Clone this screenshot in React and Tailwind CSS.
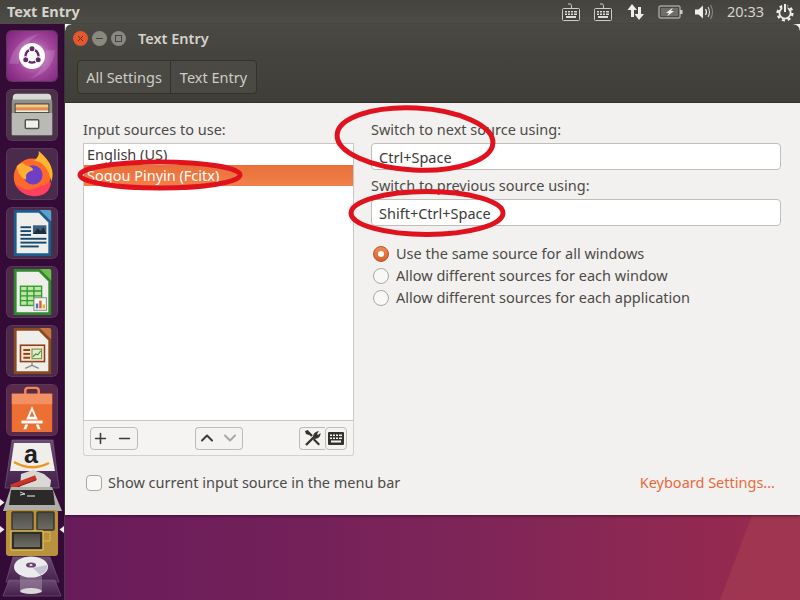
import { ChevronDown, ChevronUp, Minus, Plus } from 'lucide-react'

const font = { fontFamily: '"Noto Sans", sans-serif' }

function Tile({ children, bg = 'bg-white/10' }) {
  return (
    <div className={`flex h-[52px] w-[52px] items-center justify-center overflow-hidden rounded-[6px] border border-white/10 ${bg}`}>
      {children}
    </div>
  )
}

function UbuntuIcon() {
  return (
    <svg width="52" height="52" viewBox="0 0 52 52">
      <defs>
        <radialGradient id="ub" cx="0.55" cy="0.5" r="0.75">
          <stop offset="0" stopColor="#d9a0d0" />
          <stop offset="0.5" stopColor="#a0459a" />
          <stop offset="1" stopColor="#7c1f78" />
        </radialGradient>
      </defs>
      <rect width="52" height="52" fill="url(#ub)" />
      <path d="M2 34 Q8 8 34 3 Q14 14 12 34 Z" fill="#fff" opacity="0.16" />
      <path d="M50 20 Q48 44 22 50 Q42 40 40 20 Z" fill="#fff" opacity="0.14" />
      <circle cx="26" cy="26" r="13.5" fill="#fff" />
      <circle cx="26" cy="26" r="6.8" fill="none" stroke="#5f2a68" strokeWidth="2.4" />
      <circle cx="26" cy="18.5" r="3.6" fill="#fff" />
      <circle cx="19.5" cy="29.8" r="3.6" fill="#fff" />
      <circle cx="32.5" cy="29.8" r="3.6" fill="#fff" />
      <circle cx="26" cy="18.5" r="2.6" fill="#5f2a68" />
      <circle cx="19.5" cy="29.8" r="2.6" fill="#5f2a68" />
      <circle cx="32.5" cy="29.8" r="2.6" fill="#5f2a68" />
    </svg>
  )
}

function FilesIcon() {
  return (
    <svg width="52" height="52" viewBox="0 0 52 52">
      <rect width="52" height="52" fill="#4a3347" />
      <path d="M6 8 Q6 4 10 4 H42 Q46 4 46 8 V14 H6 Z" fill="#d8d8d4" />
      <rect x="5" y="10" width="42" height="37" rx="2" fill="#8f908b" />
      <rect x="8" y="14" width="36" height="10" fill="#3e3a35" />
      <rect x="9" y="15" width="34" height="4" fill="#f5c98a" />
      <rect x="9" y="18" width="34" height="3" fill="#e38c4f" />
      <rect x="9" y="21" width="34" height="2" fill="#f3e6d2" />
      <rect x="5" y="24" width="42" height="23" fill="#b9bab5" />
      <rect x="19" y="31" width="14" height="9" rx="1" fill="#f0f0ec" stroke="#55524d" strokeWidth="1.5" />
    </svg>
  )
}

function FirefoxIcon() {
  return (
    <svg width="52" height="52" viewBox="0 0 52 52">
      <rect width="52" height="52" fill="#4a2b4b" />
      <circle cx="26" cy="29" r="19" fill="#ff6a2b" />
      <path d="M33 2 Q52 18 46 34 Q42 14 28 12 Q34 8 33 2 Z" fill="#ffb52e" />
      <path d="M46 34 Q44 50 26 49 Q14 48 8 36 Q20 46 32 40 Q42 36 46 34 Z" fill="#ff3f5e" />
      <circle cx="27" cy="27" r="10" fill="#6d3fc4" />
      <path d="M10 18 Q16 12 19 17 Q28 19 27 22 Q18 24 20 32 Q12 30 10 18 Z" fill="#ffb033" />
    </svg>
  )
}

function DocBase({ dark, light, children }) {
  return (
    <svg width="52" height="52" viewBox="0 0 52 52">
      <rect width="52" height="52" fill="#4b2a4a" />
      <path d="M7 2 H34 L46 14 V50 H7 Z" fill={dark} />
      <path d="M34 2 H44 Q46 2 46 4 V14 Z" fill={light} />
      <path d="M10 5 H33 L43 15 V47 H10 Z" fill="#eeeeea" />
      {children}
    </svg>
  )
}

function WriterIcon() {
  return (
    <DocBase dark="#1b5d8e" light="#5aa0cd">
      <rect x="27" y="18" width="14" height="9" fill="#3d5f7f" />
      <path d="M27 27 L32 21 L35 24 L38 20 L41 27 Z" fill="#1f2f3a" />
      <g fill="#18496f">
        <rect x="14" y="19" width="11" height="2" />
        <rect x="14" y="23" width="11" height="2" />
        <rect x="14" y="27" width="11" height="2" />
        <rect x="14" y="31" width="27" height="2" />
        <rect x="14" y="35" width="27" height="2" />
        <rect x="14" y="39" width="19" height="2" />
      </g>
    </DocBase>
  )
}

function CalcIcon() {
  return (
    <DocBase dark="#2d8a2d" light="#6cc04a">
      <g fill="none" stroke="#2f9a2f" strokeWidth="1.4">
        <rect x="14" y="20" width="22" height="20" fill="#bfe6a5" />
        <path d="M14 25 H36 M14 30 H36 M14 35 H36 M21 20 V40 M28 20 V40" />
      </g>
      <rect x="28" y="32" width="13" height="13" fill="#f5f5f2" stroke="#888" />
      <rect x="30" y="38" width="2.5" height="5" fill="#3a7cc0" />
      <rect x="33.5" y="35" width="2.5" height="8" fill="#d9622b" />
      <rect x="37" y="39" width="2.5" height="4" fill="#e0b030" />
    </DocBase>
  )
}

function ImpressIcon() {
  return (
    <DocBase dark="#8a4a20" light="#c9743d">
      <rect x="14" y="20" width="25" height="17" fill="#f7e3cf" stroke="#8e3f16" strokeWidth="1.6" />
      <g fill="#8e3f16">
        <rect x="17" y="24" width="7" height="2" />
        <rect x="17" y="28" width="7" height="2" />
        <rect x="17" y="32" width="7" height="2" />
      </g>
      <rect x="26" y="24" width="10" height="10" fill="#dfeccd" stroke="#5e8a3a" />
      <path d="M27 32 L30 29 L32 30 L35 26" fill="none" stroke="#4a8a2a" strokeWidth="1.2" />
      <path d="M26 37 V41 M26 41 L19 44 M26 41 L33 44" stroke="#8a8a84" strokeWidth="1.4" fill="none" />
    </DocBase>
  )
}

function StoreIcon() {
  return (
    <svg width="52" height="52" viewBox="0 0 52 52">
      <rect width="52" height="52" fill="#5a2a4a" />
      <path d="M19 10 V6 Q19 3 22 3 H30 Q33 3 33 6 V10" fill="none" stroke="#ee8a55" strokeWidth="2.5" />
      <rect x="5" y="9" width="42" height="40" rx="1" fill="#ec6f33" />
      <rect x="5" y="9" width="42" height="11" fill="#f39062" />
      <path d="M26 22 L20 36 H32 Z M26 27 L23.5 33 H28.5 Z" fill="#fff" fillRule="evenodd" />
      <rect x="15" y="37" width="22" height="3" fill="#fff" />
      <path d="M19 41 L17 46 H20 L22 41 Z M33 41 L35 46 H32 L30 41 Z" fill="#fff" />
    </svg>
  )
}

// the folded end of the launcher, drawn as one stack in page coordinates
function FoldedStack() {
  return (
    <svg width="64" height="161" viewBox="0 439 64 161" className="block">
      <defs>
        <linearGradient id="tray" x1="0" y1="0" x2="0" y2="1">
          <stop offset="0" stopColor="#6b4a70" />
          <stop offset="1" stopColor="#42204a" />
        </linearGradient>
        <linearGradient id="pane" x1="0" y1="0" x2="0" y2="1">
          <stop offset="0" stopColor="#4a4944" />
          <stop offset="1" stopColor="#6d6c67" />
        </linearGradient>
      </defs>

      {/* amazon */}
      <path d="M12 440 H53 L59 488 H5 Z" fill="url(#tray)" stroke="#7a6180" strokeWidth="0.6" />
      <path d="M14 443 H50 L55 471 H10 Z" fill="#efeeeb" />
      <text x="31" y="463" textAnchor="middle" fontFamily="Liberation Sans, sans-serif" fontWeight="700" fontSize="25" fill="#22211f">a</text>
      <path d="M14 462 Q31 472 49 463" fill="none" stroke="#ee961c" strokeWidth="2.4" />

      {/* text editor */}
      <path d="M21 474 L33 470 L44 474 L51 480 L50 488 H20 Z" fill="#d9d8d3" />
      <path d="M11 487 L36 477.5" stroke="#c9352a" strokeWidth="5" />
      <path d="M11 489 L36 480" stroke="#8c2018" strokeWidth="1" />

      {/* terminal */}
      <path d="M11 487 H52 L62 511 H3 Z" fill="#b0aea8" />
      <path d="M11 490 H53 L55 505 H9 Z" fill="#2c2a28" />
      <path d="M20 492 L25 494 L20 495" fill="none" stroke="#dddddd" strokeWidth="1" />
      <rect x="27" y="495" width="8" height="2" fill="#8e8d88" />

      {/* files stack, active */}
      <rect x="6" y="510" width="52" height="46" rx="3" fill="#b8923f" />
      <rect x="12" y="512" width="21" height="18" rx="1" fill="url(#pane)" stroke="#38342a" strokeWidth="1.4" />
      <rect x="37" y="512" width="17" height="18" rx="1" fill="url(#pane)" stroke="#38342a" strokeWidth="1.4" />
      <path d="M42 532 H50 V541 H42" fill="none" stroke="#d9b657" strokeWidth="1" />
      <rect x="11" y="531" width="32" height="19" rx="1" fill="#2f2d29" stroke="#e2bb56" strokeWidth="1.4" />
      <rect x="14" y="534" width="26" height="13" fill="url(#pane)" />

      {/* launcher pips */}
      <path d="M0 499 V506 L4.5 502.5 Z M0 526 V533 L4.5 529.5 Z" fill="#eeeaee" />
      <path d="M64 526 V533 L59.5 529.5 Z" fill="#eeeaee" />

      {/* disc */}
      <path d="M13 557 H50 L59 582 H6 Z" fill="url(#tray)" stroke="#7a6180" strokeWidth="0.6" />
      <path d="M9 580 H55 L61 596 H3 Z" fill="url(#tray)" stroke="#7a6180" strokeWidth="0.6" />
      <path d="M20 576 V590 Q31 596 42 590 V576 Z" fill="#a994ae" opacity="0.5" />
      <ellipse cx="31" cy="591" rx="11" ry="3" fill="#dad6da" />
      <ellipse cx="31" cy="567" rx="17" ry="10.5" fill="#ebebed" />
      <path d="M33 568 L47 565 Q48 572 40 575 Z" fill="#c4c2d2" />
      <ellipse cx="31" cy="565" rx="5" ry="2.6" fill="#6b4570" />
      <ellipse cx="31" cy="565" rx="1.6" ry="0.9" fill="#e6e2e6" />
    </svg>
  )
}

function KeyboardGlyph({ className = '' }) {
  return (
    <svg width="20" height="20" viewBox="0 0 20 20" className={className}>
      <path d="M10.5 6 V3.5 Q10.5 2 9 2 H7" fill="none" stroke="#cfcdc6" strokeWidth="1" />
      <rect x="1.5" y="6.5" width="17" height="12" rx="1" fill="#44433e" stroke="#cfcdc6" />
      <g fill="#dfddd6">
        <rect x="4" y="9" width="2" height="1.5" /><rect x="7" y="9" width="2" height="1.5" /><rect x="10" y="9" width="2" height="1.5" /><rect x="13" y="9" width="3" height="1.5" />
        <rect x="4" y="11.5" width="2" height="1.5" /><rect x="7" y="11.5" width="2" height="1.5" /><rect x="10" y="11.5" width="2" height="1.5" /><rect x="13" y="11.5" width="3" height="1.5" />
        <rect x="5" y="14" width="10" height="2" />
      </g>
    </svg>
  )
}

function TopBar() {
  return (
    <header className="flex h-6 shrink-0 items-center justify-between bg-gradient-to-b from-[#44433d] to-[#4d4c46] pl-[7px] pr-[6px]">
      <span className="text-[14.5px] font-bold text-[#d5d3cb]">Text Entry</span>
      <div className="flex items-center">
        <KeyboardGlyph className="mr-[12px]" />
        <KeyboardGlyph className="mr-[13px]" />
        <svg width="20" height="20" viewBox="0 0 20 20" className="mr-[12px]">
          <path d="M6 2 L11 8 H8 V15 H5 V8 H1.5 Z M13 18 L18 12 H15 V5 H12 V12 H8.5 Z" fill="#efeee9" />
        </svg>
        <svg width="26" height="20" viewBox="0 0 26 20" className="mr-[10px]">
          <rect x="1" y="4" width="21" height="12" rx="1" fill="none" stroke="#cfcdc6" />
          <rect x="22" y="8" width="2.5" height="4" fill="#cfcdc6" />
          <rect x="3" y="6" width="17" height="8" fill="#6f6e68" />
          <path d="M15 5.5 L8 11 H11 L9 14.5 L16 9 H13 Z" fill="#f2f1ec" />
        </svg>
        <svg width="22" height="20" viewBox="0 0 22 20" className="mr-[11px]">
          <path d="M1 7.5 H4.5 L9 3.5 V16.5 L4.5 12.5 H1 Z" fill="#efeee9" />
          <path d="M11.5 7 Q13.5 10 11.5 13" fill="none" stroke="#efeee9" strokeWidth="1.2" />
          <path d="M14 5 Q17 10 14 15" fill="none" stroke="#cfcdc6" strokeWidth="1.2" />
          <path d="M16.5 3 Q20.5 10 16.5 17" fill="none" stroke="#85847d" strokeWidth="1.2" />
        </svg>
        <span className="mr-[12px] text-[14.5px] text-[#d5d3cb]">20:33</span>
        <svg width="18" height="20" viewBox="0 0 18 20">
          <circle cx="9" cy="11" r="7.4" fill="none" stroke="#efeee9" strokeWidth="2.4" strokeDasharray="3 2.8" />
          <circle cx="9" cy="11" r="5.6" fill="none" stroke="#efeee9" strokeWidth="1.8" />
          <rect x="6.4" y="1" width="5.2" height="9" fill="#4a4943" />
          <rect x="8" y="2" width="2" height="8" fill="#efeee9" />
        </svg>
      </div>
    </header>
  )
}

function Launcher() {
  return (
    <aside className="flex h-full w-[65px] shrink-0 flex-col overflow-hidden border-r border-[#4c3b4a] bg-[#340a37]">
      <div className="flex flex-col items-center gap-[7px] pr-[1px] pt-[6px]">
        <Tile><UbuntuIcon /></Tile>
        <Tile><FilesIcon /></Tile>
        <Tile><FirefoxIcon /></Tile>
        <Tile><WriterIcon /></Tile>
        <Tile><CalcIcon /></Tile>
        <Tile><ImpressIcon /></Tile>
        <Tile><StoreIcon /></Tile>
      </div>
      <div className="mt-[3px]">
        <FoldedStack />
      </div>
    </aside>
  )
}

function WindowButton({ children, color }) {
  return (
    <span className={`flex h-[15px] w-[15px] items-center justify-center rounded-full ${color}`}>{children}</span>
  )
}

function TitleBar() {
  return (
    <div className="flex h-[28px] items-center rounded-t-[7px] bg-gradient-to-b from-[#4a4943] to-[#45443e] pl-[8px] pt-[1px]">
      <div className="flex items-center gap-[4px]">
        <WindowButton color="bg-[#e4582e]">
          <svg width="7" height="7" viewBox="0 0 7 7"><path d="M1 1 L6 6 M6 1 L1 6" stroke="#7a2a14" strokeWidth="1" /></svg>
        </WindowButton>
        <WindowButton color="bg-[#8a8980]"><span className="h-[1.5px] w-[7px] bg-[#44433d]" /></WindowButton>
        <WindowButton color="bg-[#8a8980]"><span className="h-[7px] w-[7px] border border-[#44433d]" /></WindowButton>
      </div>
      <span className="ml-[12px] text-[14.5px] font-semibold text-[#d5d3cb]">Text Entry</span>
    </div>
  )
}

function Toolbar() {
  return (
    <div className="flex h-[51px] items-center border-b border-[#33322e] bg-gradient-to-b from-[#45443e] to-[#3f3e39] pl-[12px]">
      <div className="flex h-[34px] text-[14.5px] text-[#cfcdc6]">
        <div className="flex w-[94px] items-center justify-center rounded-l-[4px] border border-[#33322e] bg-[#4a4943] pt-[2px]">All Settings</div>
        <div className="-ml-px flex w-[87px] items-center justify-center rounded-r-[4px] border border-[#33322e] bg-[#4a4943] pt-[2px]">Text Entry</div>
      </div>
    </div>
  )
}

function SmallButton({ children, className = '' }) {
  return (
    <div className={`flex h-[23px] items-center justify-center border border-[#bdbbb6] bg-[#f4f3f2] ${className}`}>{children}</div>
  )
}

function ToolGlyph() {
  return (
    <svg width="18" height="18" viewBox="0 0 18 18">
      <path d="M2 16 L10 8 M4 3 L8 7" stroke="#33322e" strokeWidth="2.4" fill="none" />
      <path d="M1 2 L4 1 L6 5 L5 6 L2 5 Z" fill="#33322e" />
      <path d="M10 9 L16 15 L14.5 16.5 L9 11 Z" fill="#33322e" />
      <path d="M9 8 Q9 3 15 2 L13 5 L14 6 L16.5 4 Q17 9 11 10 Z" fill="#33322e" />
    </svg>
  )
}

function InputList() {
  return (
    <div className="flex w-[271px] flex-col">
      <div className="h-[24px] leading-[20px]">Input sources to use:</div>
      <div className="h-[278px] border border-[#c8c6c2] bg-white">
        <div className="h-[21px] pl-[3px] leading-[21px] text-[#3c3b37]">English (US)</div>
        <div className="h-[21px] bg-gradient-to-b from-[#e96f38] to-[#f2804a] pl-[3px] leading-[21px] text-white">Sogou Pinyin (Fcitx)</div>
      </div>
      <div className="flex h-[35px] items-center justify-between rounded-b-[3px] border border-t-0 border-[#d3d1cd] bg-[#f5f4f3] pl-[6px] pr-[6px]">
        <SmallButton className="w-[48px] gap-[7px] rounded-[4px] pr-[3px]">
          <Plus size={17} strokeWidth={2.2} color="#3c3b37" />
          <Minus size={17} strokeWidth={2.2} color="#3c3b37" />
        </SmallButton>
        <div className="flex">
          <SmallButton className="w-[24px] rounded-l-[4px] border-r-0">
            <ChevronUp size={20} strokeWidth={2.4} color="#3c3b37" />
          </SmallButton>
          <SmallButton className="w-[24px] rounded-r-[4px] border-l-0 bg-[#e6e5e3]">
            <ChevronDown size={20} strokeWidth={2.4} color="#a8a7a2" />
          </SmallButton>
        </div>
        <div className="flex">
          <SmallButton className="w-[26px] rounded-l-[4px] border-r-0"><ToolGlyph /></SmallButton>
          <SmallButton className="w-[22px] rounded-[4px]">
            <svg width="16" height="13" viewBox="0 0 16 13">
              <rect x="0" y="0" width="16" height="13" rx="1" fill="#33322e" />
              <g fill="#f4f3f2">
                <rect x="2" y="2.5" width="2" height="1.5" /><rect x="5" y="2.5" width="2" height="1.5" /><rect x="8" y="2.5" width="2" height="1.5" /><rect x="11" y="2.5" width="3" height="1.5" />
                <rect x="2" y="5.5" width="2" height="1.5" /><rect x="5" y="5.5" width="2" height="1.5" /><rect x="8" y="5.5" width="2" height="1.5" /><rect x="11" y="5.5" width="3" height="1.5" />
                <rect x="3" y="8.5" width="10" height="2" />
              </g>
            </svg>
          </SmallButton>
        </div>
      </div>
    </div>
  )
}

function Radio({ checked, label }) {
  return (
    <div className="flex h-[22px] items-center">
      <span className={`ml-[2px] flex h-[16px] w-[16px] items-center justify-center rounded-full border ${checked ? 'border-[#b0552c] bg-gradient-to-b from-[#f08a55] to-[#d9602c]' : 'border-[#a9a7a2] bg-[#f8f8f7]'}`}>
        {checked && <span className="h-[6px] w-[6px] rounded-full bg-white" />}
      </span>
      <span className="ml-[7px]">{label}</span>
    </div>
  )
}

function ShortcutField({ label, value }) {
  return (
    <div className="flex flex-col">
      <div className="h-[24px] leading-[20px]">{label}</div>
      <div className="flex h-[27px] items-center rounded-[4px] border border-[#c0beb9] bg-white pl-[7px] pt-[3px] text-[#3c3b37]">{value}</div>
    </div>
  )
}

function SettingsPanel() {
  return (
    <div className="flex-1 bg-[#f2f1f0] px-[18px] pt-[16px] text-[14.5px] text-[#4c4b46]">
      <div className="flex gap-[17px]">
        <InputList />
        <div className="flex w-[410px] flex-col">
          <div className="flex flex-col gap-[5px]">
            <ShortcutField label="Switch to next source using:" value="Ctrl+Space" />
            <ShortcutField label="Switch to previous source using:" value="Shift+Ctrl+Space" />
          </div>
          <div className="mt-[17px] flex flex-col">
            <Radio checked label="Use the same source for all windows" />
            <Radio label="Allow different sources for each window" />
            <Radio label="Allow different sources for each application" />
          </div>
        </div>
      </div>
      <div className="mt-[16px] flex h-[22px] items-center justify-between">
        <div className="flex items-center">
          <span className="ml-[3px] h-[16px] w-[16px] rounded-[4px] border border-[#a9a7a2] bg-[#f8f8f7]" />
          <span className="ml-[6px]">Show current input source in the menu bar</span>
        </div>
        <span className="mr-[7px] text-[#e9693c]">Keyboard Settings...</span>
      </div>
    </div>
  )
}

function Annotations() {
  return (
    <svg width="800" height="600" viewBox="0 0 800 600" className="pointer-events-none absolute left-0 top-0 z-20">
      <g fill="none" stroke="#e0121e" strokeWidth="5">
        <ellipse cx="160" cy="175" rx="80" ry="13" />
        <ellipse cx="415" cy="139" rx="78" ry="31" transform="rotate(3 415 139)" />
        <ellipse cx="427" cy="213" rx="76" ry="21.5" />
      </g>
    </svg>
  )
}

function Desktop() {
  return (
    <div className="relative flex-1 overflow-hidden bg-gradient-to-r from-[#681b5a] via-[#7b2459] to-[#9a2a4d]">
      <svg width="735" height="85" viewBox="65 515 735 85" className="absolute left-0 top-0">
        <path d="M752 515 L720 600 H800 V515 Z" fill="#a23a52" opacity="0.75" />
      </svg>
    </div>
  )
}

export default function App() {
  return (
    <div className="relative flex h-[600px] w-[800px] flex-col overflow-hidden" style={font}>
      <TopBar />
      <div className="flex min-h-0 flex-1">
        <Launcher />
        <main className="flex min-w-0 flex-1 flex-col">
          <div className="z-10 flex h-[491px] shrink-0 flex-col overflow-hidden rounded-t-[7px] shadow-[0_1px_3px_rgba(0,0,0,0.5)]">
            <TitleBar />
            <Toolbar />
            <SettingsPanel />
          </div>
          <Desktop />
        </main>
      </div>
      <Annotations />
    </div>
  )
}
